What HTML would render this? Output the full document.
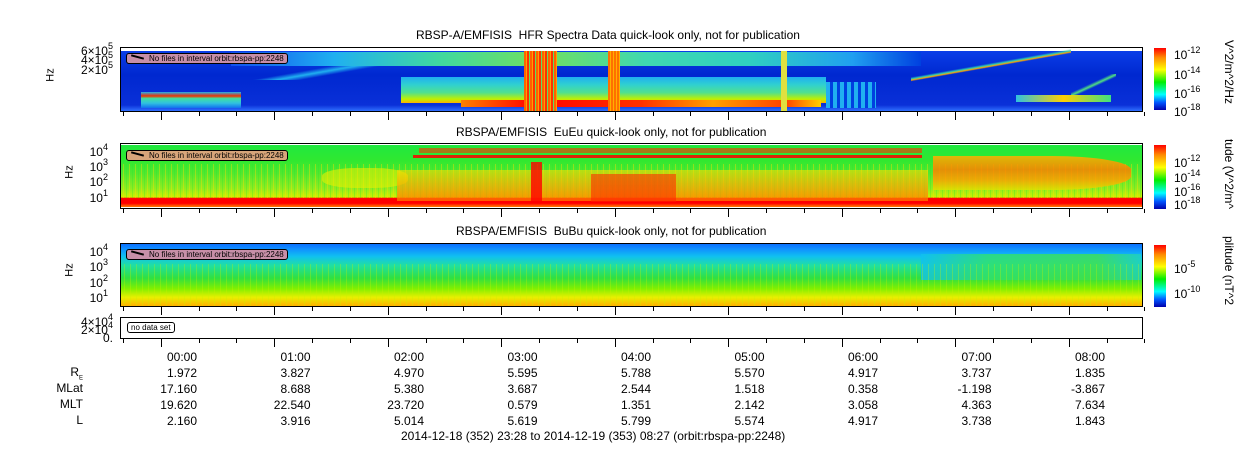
<!DOCTYPE html>
<html><head><style>
body{margin:0;width:1250px;height:449px;background:#fff;position:relative;overflow:hidden;font-family:"Liberation Sans","DejaVu Sans",sans-serif;color:#000}
.a{position:absolute}
.t{position:absolute;font-size:12px;white-space:nowrap;line-height:14px}
.p{position:absolute;left:120px;width:1023px;border:1px solid #000;box-sizing:border-box}
.lab{position:absolute;left:126px;font-size:8px;border:1px solid #000;border-radius:3px;padding:0 3px 0 22px;height:9px;line-height:9px;background:#c78fa8}
.lab:before{content:"";position:absolute;left:4px;top:2px;width:13px;height:2px;background:#000;transform:rotate(15deg)}
.cb{position:absolute;left:1154px;width:12px;background:linear-gradient(#f00,#f80 15%,#ff0 35%,#0e0 55%,#0ff 75%,#05f 88%,#00a)}
.r{text-align:right;width:60px}
.tick{position:absolute;width:1px;background:#000}
sup{font-size:9px;vertical-align:6px;line-height:0}
.yl{position:absolute;font-size:12px;line-height:14px;white-space:nowrap;text-align:right;width:60px}
</style></head><body>
<div class="t" style="left:416px;top:28px">RBSP-A/EMFISIS&nbsp; HFR Spectra Data quick-look only, not for publication</div>
<div class="t" style="left:456px;top:125px">RBSPA/EMFISIS&nbsp; EuEu quick-look only, not for publication</div>
<div class="t" style="left:456px;top:224px">RBSPA/EMFISIS&nbsp; BuBu quick-look only, not for publication</div>

<!-- panel 1 (inner coords: page x-120, y-47) -->
<div class="p" style="top:47px;height:65px;background:#fff;overflow:hidden">
<div class="a" style="left:0;top:3px;width:1021px;height:60px;background:linear-gradient(180deg,#0a3ee8,#0028d0 40%,#0a30d8 90%,#3070ff)"></div>
<div class="a" style="left:110px;top:4px;width:690px;height:14px;background:linear-gradient(90deg,#1050f0,#20b0f0 15%,#40d8a0 30%,#70e060 45%,#40d8b0 60%,#30d0c0 75%,#20a0f0 90%,#0040e0)"></div>
<div class="a" style="left:110px;top:18px;width:170px;height:14px;background:linear-gradient(170deg,transparent 40%,#20b0f0 50%,transparent 60%)"></div>
<div class="a" style="left:280px;top:29px;width:425px;height:26px;background:linear-gradient(180deg,#20b0f0,#30d0d0 30%,#50e090 60%,#c0f000 85%,#ffb000)"></div>
<div class="a" style="left:340px;top:52px;width:360px;height:7px;background:linear-gradient(90deg,#ff8000,#f00 20%,#ff3000 50%,#ffa000 70%,#ff4000 90%,#ffd000)"></div>
<div class="a" style="left:20px;top:44px;width:100px;height:16px;background:linear-gradient(180deg,#20b0f0,#f03000 25%,#40e0a0 40%,#30c0e0 70%,#1070f0)"></div>
<div class="a" style="left:403px;top:3px;width:33px;height:60px;background:repeating-linear-gradient(90deg,#ff6000 0 2px,#ffa000 2px 3px,#ff3000 3px 5px,#60e060 5px 6px)"></div>
<div class="a" style="left:487px;top:3px;width:12px;height:60px;background:repeating-linear-gradient(90deg,#ff7000 0 2px,#ffb000 2px 3px)"></div>
<div class="a" style="left:660px;top:3px;width:6px;height:60px;background:#e0e040"></div>
<div class="a" style="left:705px;top:34px;width:50px;height:26px;background:repeating-linear-gradient(90deg,#20b0f0 0 4px,#0040e0 4px 7px)"></div>
<div class="a" style="left:790px;top:0;width:160px;height:35px;background:linear-gradient(-10deg,transparent 47%,#ffa000 49%,#30d0b0 51%,transparent 54%)"></div>
<div class="a" style="left:950px;top:26px;width:45px;height:22px;background:linear-gradient(-25deg,transparent 44%,#50e080 50%,transparent 57%)"></div>
<div class="a" style="left:895px;top:47px;width:95px;height:7px;background:linear-gradient(90deg,#30c0e0,#ffd000 50%,#40e080)"></div>
</div>
<div class="lab" style="top:53px">No files in interval orbit:rbspa-pp:2248</div>

<!-- panel 2 (inner: page x-120, y-143) -->
<div class="p" style="top:143px;height:66px;background:#fff;overflow:hidden">
<div class="a" style="left:0;top:1px;width:1021px;height:62px;background:linear-gradient(180deg,#20e840 0%,#30e830 25%,#50e830 45%,#90ec20 70%,#d0f000 84%,#f00 86%,#f00 94%,#ff8000 100%)"></div>
<div class="a" style="left:0;top:20px;width:1021px;height:34px;background:repeating-linear-gradient(90deg,transparent 0 2px,rgba(255,220,0,.4) 2px 3px,transparent 3px 5px,rgba(40,230,40,.3) 5px 6px)"></div>
<div class="a" style="left:298px;top:4px;width:503px;height:5px;background:#ff3000;opacity:.6"></div>
<div class="a" style="left:292px;top:11px;width:509px;height:3px;background:#f00;opacity:.85"></div>
<div class="a" style="left:201px;top:24px;width:86px;height:20px;background:#e8f000;opacity:.6;border-radius:40%"></div>
<div class="a" style="left:276px;top:26px;width:531px;height:31px;background:linear-gradient(180deg,rgba(255,220,0,.6),rgba(255,120,0,.75))"></div>
<div class="a" style="left:410px;top:18px;width:11px;height:40px;background:#f00;opacity:.8"></div>
<div class="a" style="left:470px;top:30px;width:85px;height:28px;background:#ff2000;opacity:.55"></div>
<div class="a" style="left:812px;top:12px;width:198px;height:34px;background:linear-gradient(180deg,#ffb000,#ff8000 40%,#ffa000 70%,#e0e000);border-radius:0 40% 40% 0;opacity:.85"></div>
</div>
<div class="lab" style="top:150px;background:#d7a57a">No files in interval orbit:rbspa-pp:2248</div>

<!-- panel 3 -->
<div class="p" style="top:243px;height:64px;background:
linear-gradient(180deg,#0a70ff 0%,#1090ff 8%,#10c0f0 20%,#20e0a0 35%,#30e040 55%,#80f000 72%,#e8f000 86%,#ffb000 100%);overflow:hidden">
<div class="a" style="left:800px;top:10px;width:220px;height:26px;background:linear-gradient(90deg,#10c0f0,#30e070 30%,#40e050 80%,#20d0c0);opacity:.8"></div>
<div class="a" style="left:0;top:20px;width:1021px;height:44px;background:repeating-linear-gradient(90deg,transparent 0 3px,rgba(200,240,0,.3) 3px 4px,transparent 4px 6px)"></div>
</div>
<div class="lab" style="top:249px">No files in interval orbit:rbspa-pp:2248</div>

<!-- panel 4 -->
<div class="p" style="top:317px;height:22px"></div>
<div class="a" style="left:127px;top:322px;font-size:8px;border:1px solid #000;border-radius:3px;padding:0 3px;height:9px;line-height:9px">no data set</div>

<!-- y labels -->
<div class="yl" style="left:53px;top:44px">6×10<sup>5</sup></div>
<div class="yl" style="left:53px;top:53px">4×10<sup>5</sup></div>
<div class="yl" style="left:53px;top:63px">2×10<sup>5</sup></div>
<div class="t" style="left:44px;top:68px;transform:rotate(-90deg);font-size:11px">Hz</div>
<div class="yl" style="left:48px;top:145px">10<sup>4</sup></div>
<div class="yl" style="left:48px;top:160px">10<sup>3</sup></div>
<div class="yl" style="left:48px;top:175px">10<sup>2</sup></div>
<div class="yl" style="left:48px;top:191px">10<sup>1</sup></div>
<div class="t" style="left:63px;top:165px;transform:rotate(-90deg);font-size:11px">Hz</div>
<div class="yl" style="left:48px;top:245px">10<sup>4</sup></div>
<div class="yl" style="left:48px;top:260px">10<sup>3</sup></div>
<div class="yl" style="left:48px;top:276px">10<sup>2</sup></div>
<div class="yl" style="left:48px;top:291px">10<sup>1</sup></div>
<div class="t" style="left:63px;top:263px;transform:rotate(-90deg);font-size:11px">Hz</div>
<div class="yl" style="left:53px;top:315px">4×10<sup>4</sup></div>
<div class="yl" style="left:53px;top:323px">2×10<sup>4</sup></div>
<div class="yl" style="left:53px;top:331px">0.</div>

<!-- colorbars -->
<div class="cb" style="top:48px;height:62px"></div>
<div class="cb" style="top:145px;height:64px"></div>
<div class="cb" style="top:245px;height:62px"></div>
<div class="t" style="left:1174px;top:48px">10<sup>-12</sup></div>
<div class="t" style="left:1174px;top:68px">10<sup>-14</sup></div>
<div class="t" style="left:1174px;top:87px">10<sup>-16</sup></div>
<div class="t" style="left:1174px;top:105px">10<sup>-18</sup></div>
<div class="t" style="left:1174px;top:156px">10<sup>-12</sup></div>
<div class="t" style="left:1174px;top:171px">10<sup>-14</sup></div>
<div class="t" style="left:1174px;top:185px">10<sup>-16</sup></div>
<div class="t" style="left:1174px;top:198px">10<sup>-18</sup></div>
<div class="t" style="left:1174px;top:262px">10<sup>-5</sup></div>
<div class="t" style="left:1174px;top:287px">10<sup>-10</sup></div>
<div class="t" style="left:1236px;top:40px;transform:rotate(90deg);transform-origin:left top">V^2/m^2/Hz</div>
<div class="t" style="left:1236px;top:139px;transform:rotate(90deg);transform-origin:left top">tude (V^2/m^</div>
<div class="t" style="left:1236px;top:236px;transform:rotate(90deg);transform-origin:left top">plitude (nT^2</div>

<div id="ticks"></div>
<script>
var h='',xs=[180,293.5,407,520.5,634,747.5,861,974.5,1088];
[112,209,307,339].forEach(function(y){
 for(var i=0;i<28;i++){var x=123+i*37.83;var maj=(i%3==1);h+='<div class="tick" style="left:'+Math.round(x)+'px;top:'+y+'px;height:'+(maj?8:4)+'px"></div>';}
});
document.getElementById('ticks').innerHTML=h;
</script>

<div class="t r" style="left:23px;top:365px">R<sub style="font-size:6px">E</sub></div>
<div class="t r" style="left:23px;top:381px">MLat</div>
<div class="t r" style="left:23px;top:397px">MLT</div>
<div class="t r" style="left:23px;top:413px">L</div>
<div id="tab"></div>
<script>
var rows=[["00:00","01:00","02:00","03:00","04:00","05:00","06:00","07:00","08:00"],
["1.972","3.827","4.970","5.595","5.788","5.570","4.917","3.737","1.835"],
["17.160","8.688","5.380","3.687","2.544","1.518","0.358","-1.198","-3.867"],
["19.620","22.540","23.720","0.579","1.351","2.142","3.058","4.363","7.634"],
["2.160","3.916","5.014","5.619","5.799","5.574","4.917","3.738","1.843"]];
var tops=[350,366,382,398,414],o='';
rows.forEach(function(r,j){r.forEach(function(v,i){o+='<div class="t r" style="left:'+(xs[i]+17-60)+'px;top:'+tops[j]+'px">'+v+'</div>';});});
document.getElementById('tab').innerHTML=o;
</script>
<div class="t" style="left:401px;top:429px">2014-12-18 (352) 23:28 to 2014-12-19 (353) 08:27 (orbit:rbspa-pp:2248)</div>
</body></html>
